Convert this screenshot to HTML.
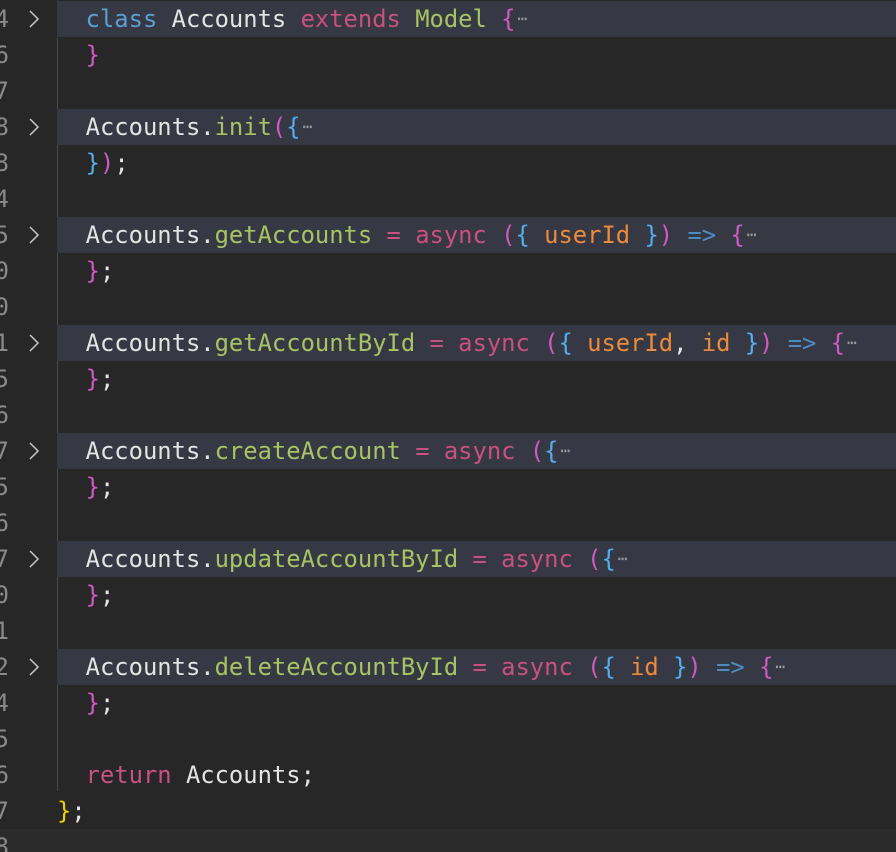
<!DOCTYPE html>
<html><head><style>
html,body{margin:0;padding:0;background:#272727;width:896px;height:852px;overflow:hidden}
.ed{position:relative;width:896px;height:852px;font-family:"DejaVu Sans Mono","Liberation Mono",monospace;font-size:23.8px}
.l{position:absolute;left:0;width:896px;height:36px;line-height:36px;white-space:pre}
.f .bd{position:absolute;left:57px;right:0;top:0;bottom:0;background:#363943}
.n{position:absolute;right:887px;color:#8a8a8a;text-align:right}
.c{position:absolute;left:57px;color:#e4e4e4}
.ch{position:absolute;left:28px;top:9px;width:12px;height:18px}
.guide{position:absolute;left:57px;top:38px;width:1px;height:753px;background:#4a4a4a}
.k{color:#5a9fd4}.p{color:#c9507f}.g{color:#a6c464}.m{color:#d159c6}.b{color:#52aef0}
.o{color:#ee8a3a}.a{color:#4b8cc2}.y{color:#f0d000}.w{color:#e4e4e4}
.e{color:#9a9a9a;font-size:16px;vertical-align:3px;margin-left:2px}
</style></head><body><div class="ed">
<div class="guide"></div>
<div class="l f" style="top:1px"><div class="bd"></div><span class="n">4</span><svg class="ch" viewBox="0 0 12 18"><path d="M2 1 L10 9 L2 17" stroke="#c8c8c8" stroke-width="1.5" fill="none"/></svg><span class="c">  <span class="k">class</span> Accounts <span class="p">extends</span> <span class="g">Model</span> <span class="m">{</span><span class="e">⋯</span></span></div>
<div class="l" style="top:37px"><span class="n">6</span><span class="c">  <span class="m">}</span></span></div>
<div class="l" style="top:73px"><span class="n">7</span><span class="c"></span></div>
<div class="l f" style="top:109px"><div class="bd"></div><span class="n">8</span><svg class="ch" viewBox="0 0 12 18"><path d="M2 1 L10 9 L2 17" stroke="#c8c8c8" stroke-width="1.5" fill="none"/></svg><span class="c">  Accounts.<span class="g">init</span><span class="m">(</span><span class="b">{</span><span class="e">⋯</span></span></div>
<div class="l" style="top:145px"><span class="n">8</span><span class="c">  <span class="b">}</span><span class="m">)</span>;</span></div>
<div class="l" style="top:181px"><span class="n">4</span></div>
<div class="l f" style="top:217px"><div class="bd"></div><span class="n">5</span><svg class="ch" viewBox="0 0 12 18"><path d="M2 1 L10 9 L2 17" stroke="#c8c8c8" stroke-width="1.5" fill="none"/></svg><span class="c">  Accounts.<span class="g">getAccounts</span> <span class="p">=</span> <span class="p">async</span> <span class="m">(</span><span class="b">{</span> <span class="o">userId</span> <span class="b">}</span><span class="m">)</span> <span class="a">=&gt;</span> <span class="m">{</span><span class="e">⋯</span></span></div>
<div class="l" style="top:253px"><span class="n">0</span><span class="c">  <span class="m">}</span>;</span></div>
<div class="l" style="top:289px"><span class="n">0</span></div>
<div class="l f" style="top:325px"><div class="bd"></div><span class="n">1</span><svg class="ch" viewBox="0 0 12 18"><path d="M2 1 L10 9 L2 17" stroke="#c8c8c8" stroke-width="1.5" fill="none"/></svg><span class="c">  Accounts.<span class="g">getAccountById</span> <span class="p">=</span> <span class="p">async</span> <span class="m">(</span><span class="b">{</span> <span class="o">userId</span>, <span class="o">id</span> <span class="b">}</span><span class="m">)</span> <span class="a">=&gt;</span> <span class="m">{</span><span class="e">⋯</span></span></div>
<div class="l" style="top:361px"><span class="n">5</span><span class="c">  <span class="m">}</span>;</span></div>
<div class="l" style="top:397px"><span class="n">6</span></div>
<div class="l f" style="top:433px"><div class="bd"></div><span class="n">7</span><svg class="ch" viewBox="0 0 12 18"><path d="M2 1 L10 9 L2 17" stroke="#c8c8c8" stroke-width="1.5" fill="none"/></svg><span class="c">  Accounts.<span class="g">createAccount</span> <span class="p">=</span> <span class="p">async</span> <span class="m">(</span><span class="b">{</span><span class="e">⋯</span></span></div>
<div class="l" style="top:469px"><span class="n">5</span><span class="c">  <span class="m">}</span>;</span></div>
<div class="l" style="top:505px"><span class="n">6</span></div>
<div class="l f" style="top:541px"><div class="bd"></div><span class="n">7</span><svg class="ch" viewBox="0 0 12 18"><path d="M2 1 L10 9 L2 17" stroke="#c8c8c8" stroke-width="1.5" fill="none"/></svg><span class="c">  Accounts.<span class="g">updateAccountById</span> <span class="p">=</span> <span class="p">async</span> <span class="m">(</span><span class="b">{</span><span class="e">⋯</span></span></div>
<div class="l" style="top:577px"><span class="n">0</span><span class="c">  <span class="m">}</span>;</span></div>
<div class="l" style="top:613px"><span class="n">1</span></div>
<div class="l f" style="top:649px"><div class="bd"></div><span class="n">2</span><svg class="ch" viewBox="0 0 12 18"><path d="M2 1 L10 9 L2 17" stroke="#c8c8c8" stroke-width="1.5" fill="none"/></svg><span class="c">  Accounts.<span class="g">deleteAccountById</span> <span class="p">=</span> <span class="p">async</span> <span class="m">(</span><span class="b">{</span> <span class="o">id</span> <span class="b">}</span><span class="m">)</span> <span class="a">=&gt;</span> <span class="m">{</span><span class="e">⋯</span></span></div>
<div class="l" style="top:685px"><span class="n">4</span><span class="c">  <span class="m">}</span>;</span></div>
<div class="l" style="top:721px"><span class="n">5</span></div>
<div class="l" style="top:757px"><span class="n">6</span><span class="c">  <span class="p">return</span> Accounts;</span></div>
<div class="l" style="top:793px"><span class="n">7</span><span class="c"><span class="y">}</span>;</span></div>
<div class="l" style="top:829px;background:#2b2b2b"><span class="n">8</span></div>
</div></body></html>
